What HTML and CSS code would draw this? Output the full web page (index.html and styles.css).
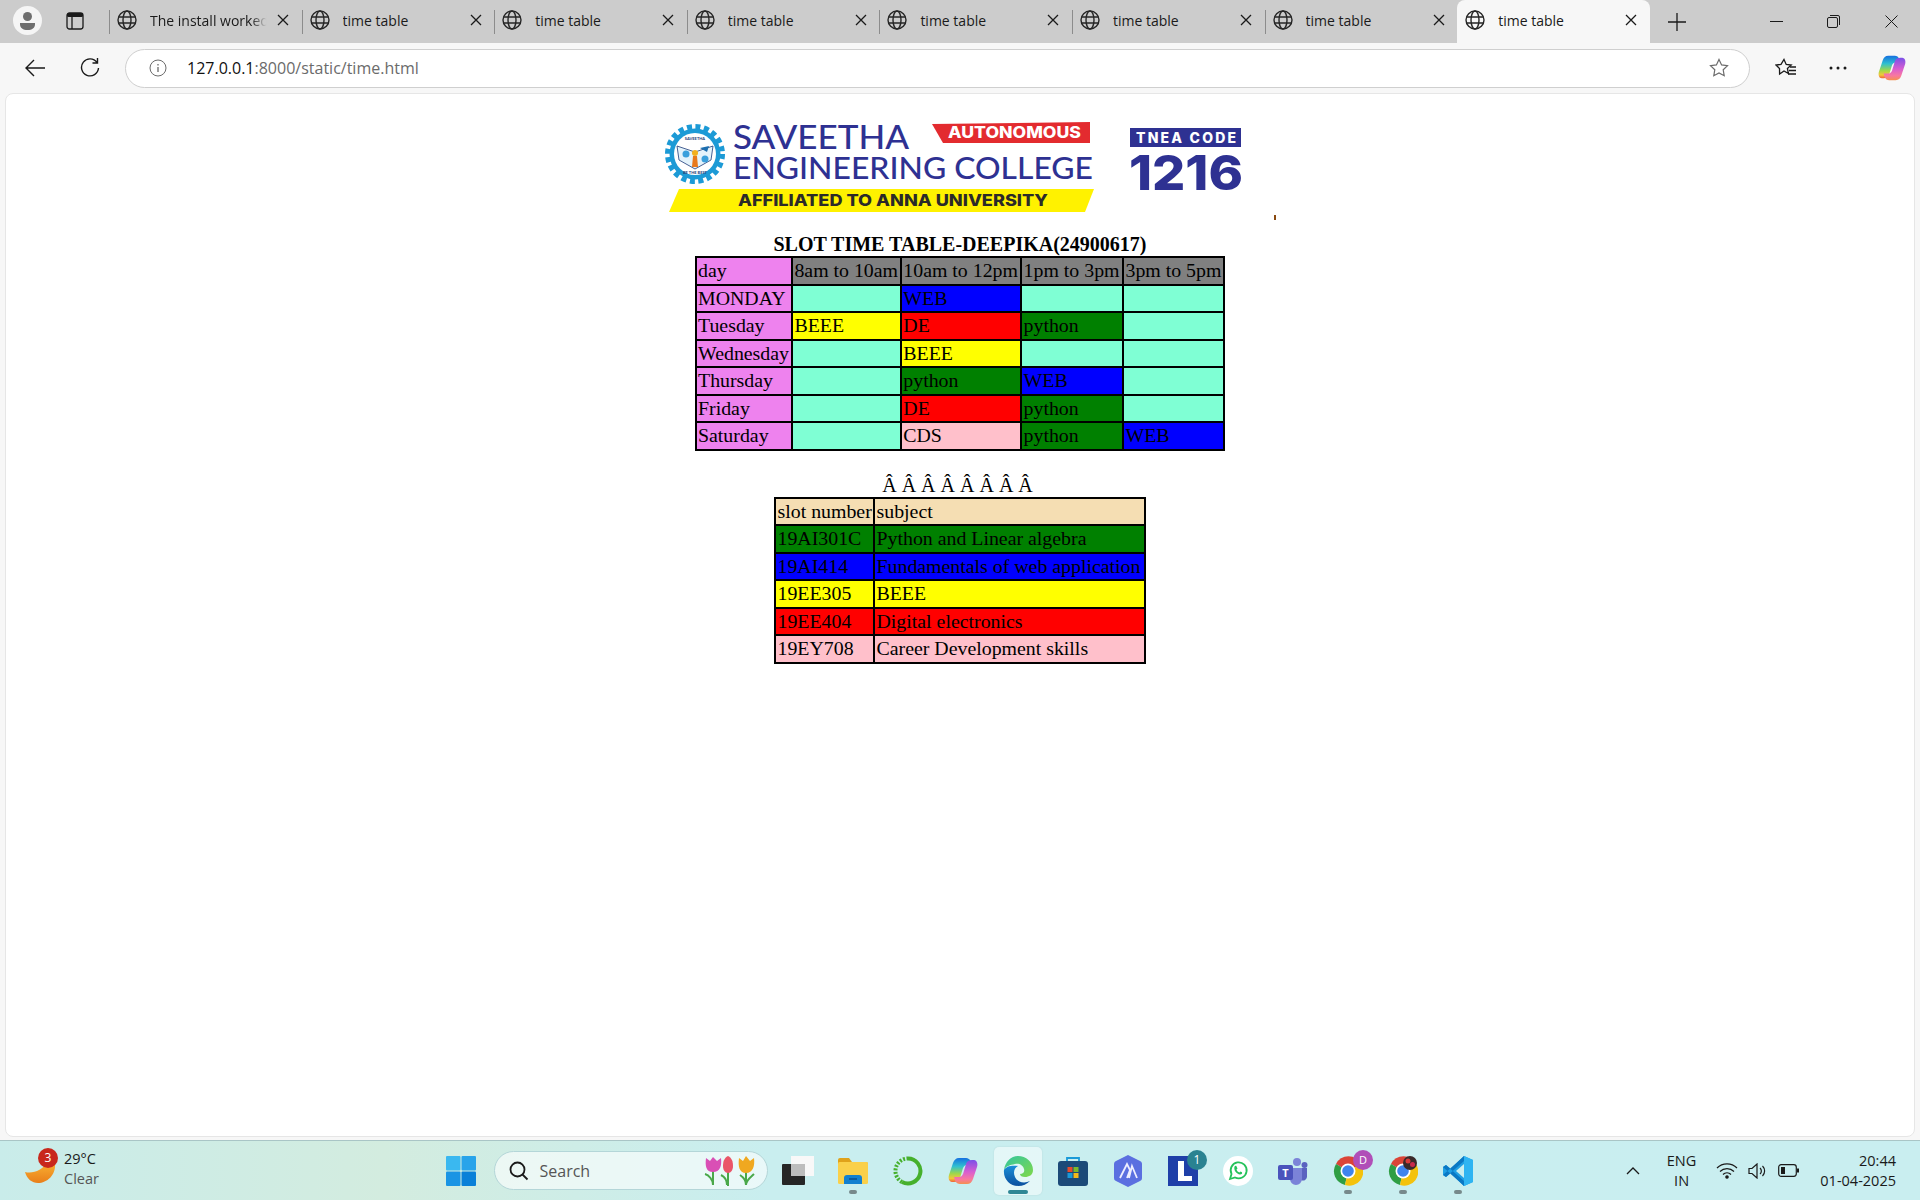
FILE: index.html
```html
<!DOCTYPE html>
<html lang="en">
<head>
  <meta charset="UTF-8">
  <title>time table</title>
  <link rel="stylesheet" href="styles.css">
</head>
<body>
<svg class="defs" width="0" height="0">
  <symbol id="globe" viewBox="0 0 20 20">
    <g fill="none" stroke="#262626" stroke-width="1.400">
      <circle cx="10" cy="10" r="9"/>
      <ellipse cx="10" cy="10" rx="4" ry="9"/>
      <path d="M1.6 7h16.8M1.6 13h16.8"/>
    </g>
  </symbol>
  <symbol id="cross" viewBox="0 0 12 12">
    <path d="M1 1l10 10M11 1L1 11" fill="none" stroke="#1a1a1a" stroke-width="1.300"/>
  </symbol>
  <linearGradient id="copilot-a" x1="0" y1="0" x2="0" y2="1">
    <stop offset="0" stop-color="#1570e0"/><stop offset=".35" stop-color="#2fc0d0"/><stop offset=".65" stop-color="#9fd84a"/><stop offset=".85" stop-color="#f2c83a"/><stop offset="1" stop-color="#f0603a"/>
  </linearGradient>
  <linearGradient id="copilot-b" x1="0" y1="0" x2="0" y2="1">
    <stop offset="0" stop-color="#7a50e8"/><stop offset=".5" stop-color="#d85ed0"/><stop offset=".8" stop-color="#f878a0"/><stop offset="1" stop-color="#f59050"/>
  </linearGradient>
  <linearGradient id="edge-a" x1="0" y1="0" x2="1" y2="1">
    <stop offset="0" stop-color="#33c6a0"/><stop offset="1" stop-color="#7fd84a"/>
  </linearGradient>
  <linearGradient id="edge-b" x1="0" y1="0" x2="0" y2="1">
    <stop offset="0" stop-color="#1b8fd8"/><stop offset="1" stop-color="#0b4f9e"/>
  </linearGradient>
  <linearGradient id="moon-fill" x1="0" y1="0" x2="0" y2="1">
    <stop offset="0" stop-color="#f9b233"/><stop offset="1" stop-color="#e97f1a"/>
  </linearGradient>
  <symbol id="copilot" viewBox="0 0 30 30">
    <path d="M11 2h7c2 0 4 1 5 4l1 3h-5c-2 0-3 1-4 3l-3 10c-1 3-3 4-6 4H4C1 26 0 22 1 19L5 7c1-3 3-5 6-5z" fill="url(#copilot-a)"/>
    <path d="M19 28h-7c-2 0-4-1-5-4l-1-3h5c2 0 3-1 4-3l3-10c1-3 3-4 6-4h2c3 0 4 4 3 7l-4 12c-1 3-3 5-6 5z" fill="url(#copilot-b)"/>
  </symbol>
  <symbol id="chrome" viewBox="0 0 30 30">
    <path d="M15 15L3 8a14 14 0 0 1 25 0z" fill="#db4437"/>
    <path d="M15 15L3 8a14 14 0 0 0 9 21z" fill="#2f9e44"/>
    <path d="M15 15l13-7a14 14 0 0 1-16 21z" fill="#f4c20d"/>
    <circle cx="15" cy="15" r="7.500" fill="#fff"/>
    <circle cx="15" cy="15" r="5.800" fill="#3f84ee"/>
  </symbol>
</svg>

<div class="tabstrip">
  <div class="profile">
    <svg width="29" height="29" viewBox="0 0 29 29">
      <circle cx="14.500" cy="14.500" r="14.500" fill="#f5f5f5"/>
      <circle cx="14.500" cy="10.500" r="4.500" fill="#6e6e6e"/>
      <path d="M7 17h15v1c0 4-3 6-7.500 6S7 22 7 18z" fill="#6e6e6e"/>
    </svg>
  </div>
  <div class="workspace">
    <svg width="18" height="18" viewBox="0 0 18 18">
      <rect x="1" y="1" width="16" height="16" rx="2.500" fill="none" stroke="#1a1a1a" stroke-width="1.300"/>
      <rect x="1" y="1" width="16" height="4" rx="1.500" fill="#1a1a1a"/>
      <path d="M6 5v12" stroke="#1a1a1a" stroke-width="1.300"/>
    </svg>
  </div>
  <div class="tab">
    <svg class="tab-icon"><use href="#globe"/></svg>
    <span class="tab-title faded">The install worked</span>
    <svg class="tab-close"><use href="#cross"/></svg>
  </div>
  <div class="tab">
    <svg class="tab-icon"><use href="#globe"/></svg>
    <span class="tab-title">time table</span>
    <svg class="tab-close"><use href="#cross"/></svg>
  </div>
  <div class="tab">
    <svg class="tab-icon"><use href="#globe"/></svg>
    <span class="tab-title">time table</span>
    <svg class="tab-close"><use href="#cross"/></svg>
  </div>
  <div class="tab">
    <svg class="tab-icon"><use href="#globe"/></svg>
    <span class="tab-title">time table</span>
    <svg class="tab-close"><use href="#cross"/></svg>
  </div>
  <div class="tab">
    <svg class="tab-icon"><use href="#globe"/></svg>
    <span class="tab-title">time table</span>
    <svg class="tab-close"><use href="#cross"/></svg>
  </div>
  <div class="tab">
    <svg class="tab-icon"><use href="#globe"/></svg>
    <span class="tab-title">time table</span>
    <svg class="tab-close"><use href="#cross"/></svg>
  </div>
  <div class="tab">
    <svg class="tab-icon"><use href="#globe"/></svg>
    <span class="tab-title">time table</span>
    <svg class="tab-close"><use href="#cross"/></svg>
  </div>
  <div class="tab active">
    <svg class="tab-icon"><use href="#globe"/></svg>
    <span class="tab-title">time table</span>
    <svg class="tab-close"><use href="#cross"/></svg>
  </div>
  <div class="new-tab">
    <svg width="18" height="18" viewBox="0 0 18 18"><path d="M9 0v18M0 9h18" stroke="#1a1a1a" stroke-width="1.300"/></svg>
  </div>
  <div class="window-buttons">
    <div class="window-button">
      <svg width="13" height="13" viewBox="0 0 13 13"><path d="M0 6.500h13" stroke="#1a1a1a" stroke-width="1"/></svg>
    </div>
    <div class="window-button">
      <svg width="13" height="13" viewBox="0 0 13 13" fill="none" stroke="#1a1a1a"><rect x=".5" y="2.500" width="10" height="10" rx="1.500"/><path d="M3 .5h8a1.500 1.500 0 0 1 1.500 1.500v8"/></svg>
    </div>
    <div class="window-button">
      <svg width="13" height="13" viewBox="0 0 13 13"><path d="M.5.5l12 12M12.500.5l-12 12" stroke="#1a1a1a" stroke-width="1"/></svg>
    </div>
  </div>
</div>

<div class="toolbar">
  <button class="tool-button">
    <svg width="20" height="18" viewBox="0 0 20 18"><path d="M9 1L1 9l8 8M1 9h19" fill="none" stroke="#1a1a1a" stroke-width="1.400"/></svg>
  </button>
  <button class="tool-button">
    <svg width="20" height="20" viewBox="0 0 20 20"><path d="M17 4.500A8.500 8.500 0 1 0 18.500 10M17.500 0v5h-5" fill="none" stroke="#1a1a1a" stroke-width="1.400"/></svg>
  </button>
  <div class="address-bar">
    <svg width="18" height="18" viewBox="0 0 18 18" fill="none" stroke="#6b6b6b"><circle cx="9" cy="9" r="8"/><path d="M9 8v5M9 5v1.500" stroke-width="1.300"/></svg>
    <span class="url"><span class="url-host">127.0.0.1</span>:8000/static/time.html</span>
    <svg class="star" width="20" height="20" viewBox="0 0 20 20"><path d="M10 1.500l2.600 5.400 5.900.8-4.300 4.100 1 5.900-5.200-2.800-5.200 2.800 1-5.900L1.500 7.700l5.900-.8z" fill="none" stroke="#6b6b6b" stroke-width="1.200"/></svg>
  </div>
  <div class="tool-icons">
    <svg width="22" height="20" viewBox="0 0 22 20" fill="none" stroke="#1a1a1a" stroke-width="1.300"><path d="M9 1.500l2.200 4.900 5 .6-3.800 3.500 1 5-4.400-2.500-4.400 3-.1-5.500L1 7l5-.6z"/><path d="M15 9h6M14 12.500h7M13 16h8"/></svg>
    <svg width="20" height="4" viewBox="0 0 20 4" fill="#1a1a1a"><circle cx="3" cy="2" r="1.500"/><circle cx="10" cy="2" r="1.500"/><circle cx="17" cy="2" r="1.500"/></svg>
    <svg width="28" height="28"><use href="#copilot"/></svg>
  </div>
</div>

<div class="page">
  <svg class="logo" width="640" height="120" viewBox="640 113 640 120">
    <g class="crest">
      <circle cx="695" cy="154" r="27" fill="none" stroke="#1c9ad6" stroke-width="6" stroke-dasharray="5 3.480"/>
      <circle cx="695" cy="154" r="25.500" fill="#1c9ad6"/>
      <circle cx="695" cy="154" r="21" fill="#fff"/>
      <path d="M677 146l18 6 18-6-2 14-16 9-16-9z" fill="#e4f3fb" stroke="#1c3a78" stroke-width=".8"/>
      <circle cx="686" cy="154" r="3.500" fill="#3aa0dc"/>
      <circle cx="705" cy="159" r="3.500" fill="#3aa0dc"/>
      <path d="M700 148l9-2-2 6z" fill="#1c6fb0"/>
      <path d="M692 167l1-11h4l1 11z" fill="#e8791c"/>
      <circle cx="695" cy="153" r="3" fill="#f2b01e"/>
      <text class="crest-text" x="695" y="140" text-anchor="middle">SAVEETHA</text>
      <text class="crest-text" x="695" y="173.500" text-anchor="middle">BE THE BEST</text>
    </g>
    <text class="logo-name" x="733" y="149" font-size="33" textLength="176" lengthAdjust="spacingAndGlyphs">SAVEETHA</text>
    <text class="logo-name" x="733" y="179" font-size="30" textLength="360" lengthAdjust="spacingAndGlyphs">ENGINEERING COLLEGE</text>
    <path d="M932 124l158-2v21H943z" fill="#e32b2f"/>
    <text class="logo-bold" x="948" y="138" font-size="15.500" fill="#fff" textLength="133" lengthAdjust="spacingAndGlyphs">AUTONOMOUS</text>
    <path d="M679 189h415l-9 23H669z" fill="#fff200"/>
    <text class="logo-bold" x="738" y="206" font-size="16" fill="#2b2a29" textLength="310" lengthAdjust="spacingAndGlyphs">AFFILIATED TO ANNA UNIVERSITY</text>
    <rect x="1130" y="128" width="111" height="19" fill="#2e3192"/>
    <text class="logo-bold" x="1136" y="143" font-size="14" fill="#fff" textLength="100" lengthAdjust="spacing">TNEA CODE</text>
    <text class="logo-bold" x="1129" y="190" font-size="48" fill="#2e3192" textLength="114" lengthAdjust="spacingAndGlyphs">1216</text>
    <rect x="1274" y="215" width="2" height="5" fill="#8a4a10"/>
  </svg>

  <table class="slots">
    <caption class="title">SLOT TIME TABLE-DEEPIKA(24900617)</caption>
    <colgroup>
      <col class="col-day"><col class="col-a"><col class="col-b"><col class="col-c"><col class="col-d">
    </colgroup>
    <tr><td class="violet">day</td><td class="gray">8am to 10am</td><td class="gray">10am to 12pm</td><td class="gray">1pm to 3pm</td><td class="gray">3pm to 5pm</td></tr>
    <tr><td class="violet">MONDAY</td><td class="aqua"></td><td class="blue">WEB</td><td class="aqua"></td><td class="aqua"></td></tr>
    <tr><td class="violet">Tuesday</td><td class="yellow">BEEE</td><td class="red">DE</td><td class="green">python</td><td class="aqua"></td></tr>
    <tr><td class="violet">Wednesday</td><td class="aqua"></td><td class="yellow">BEEE</td><td class="aqua"></td><td class="aqua"></td></tr>
    <tr><td class="violet">Thursday</td><td class="aqua"></td><td class="green">python</td><td class="blue">WEB</td><td class="aqua"></td></tr>
    <tr><td class="violet">Friday</td><td class="aqua"></td><td class="red">DE</td><td class="green">python</td><td class="aqua"></td></tr>
    <tr><td class="violet">Saturday</td><td class="aqua"></td><td class="pink">CDS</td><td class="green">python</td><td class="blue">WEB</td></tr>
  </table>

  <table class="subjects">
    <caption class="blank-title">Â Â Â Â Â Â Â Â</caption>
    <colgroup>
      <col class="col-slot"><col class="col-subject">
    </colgroup>
    <tr><td class="wheat">slot number</td><td class="wheat">subject</td></tr>
    <tr><td class="green">19AI301C</td><td class="green">Python and Linear algebra</td></tr>
    <tr><td class="blue">19AI414</td><td class="blue">Fundamentals of web application</td></tr>
    <tr><td class="yellow">19EE305</td><td class="yellow">BEEE</td></tr>
    <tr><td class="red">19EE404</td><td class="red">Digital electronics</td></tr>
    <tr><td class="pink">19EY708</td><td class="pink">Career Development skills</td></tr>
  </table>
</div>

<div class="taskbar">
  <div class="weather">
    <svg class="moon" width="31" height="24" viewBox="0 0 31 24">
      <path d="M0 12c8 2 18-2 22-10l8 2c1 11-8 19-17 19C7 23 2 19 0 12z" fill="url(#moon-fill)"/>
    </svg>
    <span class="badge badge-red">3</span>
    <div class="weather-text">
      <span>29°C</span>
      <span class="muted">Clear</span>
    </div>
  </div>
  <div class="task-item">
    <svg width="30" height="30" viewBox="0 0 30 30">
      <rect x="0" y="0" width="14.500" height="14.500" rx="1" fill="#3ab8f0"/>
      <rect x="15.500" y="0" width="14.500" height="14.500" rx="1" fill="#28a4ea"/>
      <rect x="0" y="15.500" width="14.500" height="14.500" rx="1" fill="#1a94e4"/>
      <rect x="15.500" y="15.500" width="14.500" height="14.500" rx="1" fill="#0a80d8"/>
    </svg>
  </div>
  <div class="search">
    <svg width="20" height="20" viewBox="0 0 20 20" fill="none" stroke="#1a1a1a" stroke-width="1.800"><circle cx="8.500" cy="8.500" r="7"/><path d="M13.500 13.500l5 5"/></svg>
    <span class="search-label">Search</span>
    <svg class="tulips" width="58" height="30" viewBox="0 0 58 30">
      <g stroke="#4aa84a" stroke-width="2" fill="none"><path d="M11 15v14M26 16v14M44 15v14"/><path d="M3 18c4 1 8 6 8 11M19 19c4 2 6 5 6 10M38 19c3 2 6 5 6 10M52 18c-3 3-8 6-8 11"/></g>
      <path d="M4 2l4 3 3-4 4 4 4-3c1 8-1 14-8 14S3 10 4 2z" fill="#d94fb5"/>
      <path d="M26 0c4 2 5 6 5 10s-2 7-5 7-5-3-5-7 1-8 5-10z" fill="#ea5568"/>
      <path d="M37 2l4 3 3-5 4 5 4-3c1 8-1 15-8 15S36 10 37 2z" fill="#f0a820"/>
    </svg>
  </div>
  <div class="task-item">
    <svg width="32" height="30" viewBox="0 0 32 30">
      <rect x="9" y="0" width="23" height="20" fill="#f8f8f8"/>
      <rect x="0" y="8" width="23" height="21" rx="1" fill="#262626"/>
      <rect x="9" y="8" width="14" height="12" fill="#bdbdbd"/>
    </svg>
  </div>
  <div class="task-item">
    <svg width="30" height="26" viewBox="0 0 30 26">
      <path d="M0 2a2 2 0 0 1 2-2h9l3 4h14a2 2 0 0 1 2 2v3H0z" fill="#e0a21a"/>
      <rect y="4" width="30" height="22" rx="1.500" fill="#fad04a"/>
      <path d="M6 26v-6a3 3 0 0 1 3-3h12a3 3 0 0 1 3 3v6z" fill="#1280d0"/>
      <path d="M11 21h8" stroke="#0a4f90" stroke-width="1.500"/>
    </svg>
    <span class="running"></span>
  </div>
  <div class="task-item">
    <svg width="30" height="30" viewBox="0 0 30 30" fill="none" stroke="#46b02c">
      <path d="M15 2.500A12.500 12.500 0 1 1 9 26" stroke-width="4"/>
      <path d="M9 26A12.500 12.500 0 0 1 15 2.500" stroke-width="4" stroke-dasharray="2 1.500"/>
    </svg>
  </div>
  <div class="task-item">
    <svg width="30" height="30"><use href="#copilot"/></svg>
  </div>
  <div class="task-item current">
    <svg width="30" height="30" viewBox="0 0 30 30">
      <path d="M1 14C2 6 8 0 15 0c8 0 15 6 15 14 0 5-4 7-8 7-3 0-5-1-5-3 3 0 5-2 4-5-1-4-5-6-9-5-5 1-9 2-11 6z" fill="url(#edge-a)"/>
      <path d="M1 14c-1 9 6 16 14 16 5 0 9-2 12-5-6 3-13 1-15-4-2-4-1-9 3-11C9 9 3 10 1 14z" fill="url(#edge-b)"/>
    </svg>
    <span class="running active-run"></span>
  </div>
  <div class="task-item">
    <svg width="30" height="30" viewBox="0 0 30 30">
      <path d="M9 7V2h12v5" fill="none" stroke="#1a9ad8" stroke-width="1.800"/>
      <rect y="5" width="30" height="25" rx="3" fill="#1c4a78"/>
      <rect x="9.500" y="11" width="5" height="5" fill="#e84a2a"/><rect x="15.500" y="11" width="5" height="5" fill="#7ab82a"/>
      <rect x="9.500" y="17" width="5" height="5" fill="#1a9ad8"/><rect x="15.500" y="17" width="5" height="5" fill="#f4b81a"/>
    </svg>
  </div>
  <div class="task-item">
    <svg width="28" height="32" viewBox="0 0 28 32">
      <path d="M14 0l12 6c2 1 2 2 2 4v12c0 2 0 3-2 4l-12 6-12-6c-2-1-2-2-2-4V10c0-2 0-3 2-4z" fill="#5b6fe0"/>
      <path d="M6 23l7-14 3 6-3 8M15 23l3-12 5 12" fill="none" stroke="#eef" stroke-width="1.800"/>
    </svg>
  </div>
  <div class="task-item">
    <svg width="30" height="30" viewBox="0 0 30 30">
      <rect width="30" height="30" fill="#1f3fa8"/>
      <path d="M10 5h6v15h8v5H10z" fill="#fff"/>
    </svg>
    <span class="badge badge-teal">1</span>
  </div>
  <div class="task-item">
    <svg width="30" height="30" viewBox="0 0 30 30">
      <circle cx="15" cy="15" r="15" fill="#fff"/>
      <path d="M7 23l1.500-5A8 8 0 1 1 12 21.500z" fill="none" stroke="#25c25a" stroke-width="1.800"/>
      <path d="M11.500 10.500c1-1 2-1 2.500 1l.5 1-1 1c.5 1.500 1.500 2.500 3 3l1-1 1.500.7c.5 1.300-.5 2.300-2 2.300-3.500-.5-6.500-4-5.500-8z" fill="#25c25a"/>
    </svg>
  </div>
  <div class="task-item">
    <svg width="30" height="28" viewBox="0 0 30 28">
      <circle cx="19" cy="5" r="4" fill="#7b83d8"/><circle cx="26.500" cy="8" r="3" fill="#5a62c0"/>
      <path d="M21 11h8v9a4 4 0 0 1-6 3z" fill="#5a62c0"/>
      <path d="M10 11h14v11a6 6 0 0 1-12 0z" fill="#7b83d8"/>
      <rect y="8" width="15" height="15" rx="2" fill="#4b53bc"/>
      <text class="teams-t" x="7.500" y="20" text-anchor="middle">T</text>
    </svg>
  </div>
  <div class="task-item">
    <svg width="30" height="30"><use href="#chrome"/></svg>
    <span class="badge badge-purple">D</span>
    <span class="running"></span>
  </div>
  <div class="task-item">
    <svg width="30" height="30"><use href="#chrome"/></svg>
    <svg class="avatar" width="14" height="14" viewBox="0 0 14 14"><circle cx="7" cy="7" r="7" fill="#3a2a2a"/><circle cx="5" cy="5" r="2.500" fill="#d83a3a"/><circle cx="9.500" cy="8.500" r="2.500" fill="#c82a4a"/></svg>
    <span class="running"></span>
  </div>
  <div class="task-item">
    <svg width="30" height="30" viewBox="0 0 30 30">
      <path d="M21 0l9 4v22l-9 4L8 17l-5 4-3-2V11l3-2 5 4z" fill="#1f9fe4"/>
      <path d="M21 0l9 4v22l-9 4z" fill="#2eb4f2"/>
      <path d="M21 8v14l-8-7z" fill="#c9eef0"/>
      <path d="M3 9l18 16v5L0 11zM3 21L21 5V0L0 19z" fill="#0a78c4"/>
    </svg>
    <span class="running"></span>
  </div>
  <div class="tray">
    <svg class="tray-caret" width="14" height="8" viewBox="0 0 14 8"><path d="M1 7l6-6 6 6" fill="none" stroke="#1a1a1a" stroke-width="1.300"/></svg>
    <div class="lang"><span>ENG</span><span>IN</span></div>
    <div class="tray-icons">
      <svg width="22" height="17" viewBox="0 0 22 17" fill="none" stroke="#1a1a1a" stroke-width="1.200"><path d="M1 6a14 14 0 0 1 20 0M4 9.500a10 10 0 0 1 14 0M7 12.500a5.500 5.500 0 0 1 8 0"/><circle cx="11" cy="15" r="1.200" fill="#1a1a1a"/></svg>
      <svg width="20" height="16" viewBox="0 0 20 16" fill="none" stroke="#1a1a1a" stroke-width="1.200"><path d="M1 5.500h3L9 1v14l-5-4.500H1z"/><path d="M12 5a4 4 0 0 1 0 6M14.500 3a7 7 0 0 1 0 10"/></svg>
      <svg width="21" height="13" viewBox="0 0 21 13"><rect x=".7" y=".7" width="17.600" height="11.600" rx="2.500" fill="none" stroke="#1a1a1a" stroke-width="1.200"/><rect x="3" y="3" width="4" height="7" fill="#1a1a1a"/><rect x="19" y="4.500" width="2" height="4" fill="#1a1a1a"/></svg>
    </div>
    <div class="clock"><span>20:44</span><span>01-04-2025</span></div>
  </div>
</div>
</body>
</html>
```

FILE: styles.css
```css
* {
    margin: 0;
    padding: 0;
    box-sizing: border-box;
}

body {
    height: 100vh;
    display: flex;
    flex-direction: column;
    overflow: hidden;
    background-color: #f7f7f7;
    font-family: "Open Sans", "Noto Sans", sans-serif;
    color: #1a1a1a;
}

.defs {
    position: absolute;
}

/* Browser tabs */
.tabstrip {
    height: 43px;
    flex: none;
    display: flex;
    background-color: #cccccc;
}

.profile {
    width: 58px;
    padding: 6px 0 0 13px;
}

.workspace {
    width: 51px;
    padding: 12px 0 0 8px;
}

.tab {
    width: 192.6px;
    height: 43px;
    position: relative;
    display: flex;
    align-items: center;
    padding-bottom: 3px;
}

.tab::before {
    content: "";
    position: absolute;
    left: 0;
    top: 10px;
    height: 24px;
    width: 1px;
    background-color: #8c8c8c;
}

.tab-icon {
    width: 20px;
    height: 20px;
    margin-left: 8px;
    flex: none;
}

.tab-title {
    width: 119px;
    margin-left: 13px;
    font-size: 14px;
    white-space: nowrap;
    overflow: hidden;
}

.tab-title.faded {
    -webkit-mask-image: linear-gradient(to right, #000 85%, transparent 98%);
    mask-image: linear-gradient(to right, #000 85%, transparent 98%);
}

.tab-close {
    width: 12px;
    height: 12px;
    margin-left: 8px;
    flex: none;
}

.tab.active {
    background-color: #f7f7f7;
    border-radius: 8px 8px 0 0;
}

.tab.active::before {
    display: none;
}

.new-tab {
    width: 54px;
    padding: 13px 0 0 18px;
}

.window-buttons {
    margin-left: auto;
    display: flex;
}

.window-button {
    width: 57.5px;
    padding-top: 11px;
    text-align: center;
}

/* Address bar row */
.toolbar {
    height: 50px;
    flex: none;
    display: flex;
    align-items: center;
    padding: 0 0 0 7px;
    background-color: #f7f7f7;
}

.tool-button {
    width: 55px;
    height: 38px;
    border: none;
    background: none;
    display: flex;
    align-items: center;
    justify-content: center;
}

.address-bar {
    width: 1625px;
    height: 39px;
    margin-left: 8px;
    display: flex;
    align-items: center;
    padding: 0 20px 0 23px;
    background-color: #fff;
    border: 1px solid #cfcfcf;
    border-radius: 20px;
}

.url {
    margin-left: 20px;
    font-size: 16px;
    color: #6b6b6b;
}

.url-host {
    color: #111;
}

.star {
    margin-left: auto;
}

.tool-icons {
    flex: 1;
    display: flex;
    align-items: center;
    justify-content: space-between;
    padding: 0 14px 0 25px;
}

/* Page content */
.page {
    flex: 1;
    margin: 0 5px 3px;
    background-color: #fff;
    border: 1px solid #e6e6e6;
    border-radius: 8px;
    color: #000;
    font-family: "Liberation Serif", serif;
    font-size: 19.85px;
}

.logo {
    display: block;
    margin: 19px auto 0;
}

.logo-name {
    font-family: Lato, sans-serif;
    font-weight: 500;
    fill: #2e3192;
}

.logo-bold {
    font-family: Inter, Lato, sans-serif;
    font-weight: 800;
}

.crest-text {
    font-family: Lato, sans-serif;
    font-size: 4px;
    font-weight: 700;
    fill: #1c3a78;
}

table {
    margin: 0 auto;
    border-collapse: collapse;
    table-layout: fixed;
}

td {
    height: 27.5px;
    padding: 0 1.5px;
    border: 2px solid #000;
    white-space: nowrap;
    overflow: hidden;
}

.title {
    font-size: 20px;
    font-weight: bold;
    line-height: 23px;
}

.blank-title {
    font-size: 20px;
    line-height: 23px;
    padding-right: 5px;
}

.slots {
    width: 529px;
}

.col-day { width: 96.4px; }
.col-a { width: 108.9px; }
.col-b { width: 120.3px; }
.col-c { width: 101.9px; }
.col-d { width: 101.5px; }

.subjects {
    width: 370px;
    margin-top: 23px;
}

.col-slot { width: 99px; }
.col-subject { width: 271px; }

.violet { background-color: #ee82ee; }
.gray { background-color: #808080; }
.aqua { background-color: #7fffd4; }
.green { background-color: #008000; }
.blue { background-color: #0000ff; }
.yellow { background-color: #ffff00; }
.red { background-color: #ff0000; }
.pink { background-color: #ffc0cb; }
.wheat { background-color: #f5deb3; }

/* Windows taskbar */
.taskbar {
    height: 60px;
    flex: none;
    display: flex;
    align-items: center;
    background: linear-gradient(to right, #c9ecea, #d3ecdf 20%, #c9eeef 40%, #c9eef0);
    border-top: 1px solid #a9c5c6;
}

.weather {
    width: 433.5px;
    height: 100%;
    position: relative;
    display: flex;
    align-items: center;
    padding: 0 0 4px 64px;
}

.moon {
    position: absolute;
    left: 25px;
    top: 19px;
}

.badge {
    position: absolute;
    width: 20px;
    height: 20px;
    border-radius: 50%;
    color: #fff;
    font-size: 12px;
    line-height: 20px;
    text-align: center;
}

.badge-red {
    left: 38px;
    top: 7px;
    background-color: #c8281c;
}

.weather-text {
    display: flex;
    flex-direction: column;
    gap: 2px;
    font-size: 14.5px;
    line-height: 18px;
}

.muted {
    color: #555;
}

.task-item {
    width: 55px;
    height: 48px;
    flex: none;
    position: relative;
    display: flex;
    align-items: center;
    justify-content: center;
    border-radius: 5px;
}

.task-item.current {
    background-color: rgba(255, 255, 255, 0.5);
    box-shadow: 0 0 2px rgba(0, 0, 0, 0.1);
    width: 48px;
    margin: 0 3.5px;
}

.running {
    position: absolute;
    left: 50%;
    bottom: 1px;
    width: 8px;
    height: 4px;
    margin-left: -4px;
    border-radius: 2px;
    background-color: #77898b;
}

.running.active-run {
    width: 20px;
    margin-left: -10px;
    background-color: #2f8795;
}

.badge-teal {
    right: 3px;
    top: 3px;
    background-color: #2a8291;
}

.badge-purple {
    right: 2px;
    top: 3px;
    background-color: #b04fb8;
    font-size: 11px;
}

.avatar {
    position: absolute;
    right: 13px;
    top: 9px;
}

.teams-t {
    fill: #fff;
    font-family: "Open Sans", sans-serif;
    font-size: 11px;
    font-weight: 700;
}

.search {
    width: 274px;
    height: 39px;
    margin: 0 2.5px 0 5px;
    flex: none;
    display: flex;
    align-items: center;
    padding: 0 7px 0 14px;
    background-color: rgba(255, 255, 255, 0.6);
    border: 1px solid #b4d6d8;
    border-radius: 20px;
}

.search-label {
    margin-left: 11px;
    font-size: 16px;
    color: #555;
}

.tulips {
    margin-left: auto;
}

.tray {
    margin-left: auto;
    display: flex;
    align-items: center;
    padding-right: 24px;
    font-size: 14.5px;
}

.tray-caret {
    margin-right: 27px;
}

.lang {
    display: flex;
    flex-direction: column;
    align-items: center;
    line-height: 20px;
}

.tray-icons {
    display: flex;
    align-items: center;
    gap: 10px;
    margin: 0 21px 0 20px;
}

.clock {
    display: flex;
    flex-direction: column;
    align-items: flex-end;
    line-height: 20px;
}
```
